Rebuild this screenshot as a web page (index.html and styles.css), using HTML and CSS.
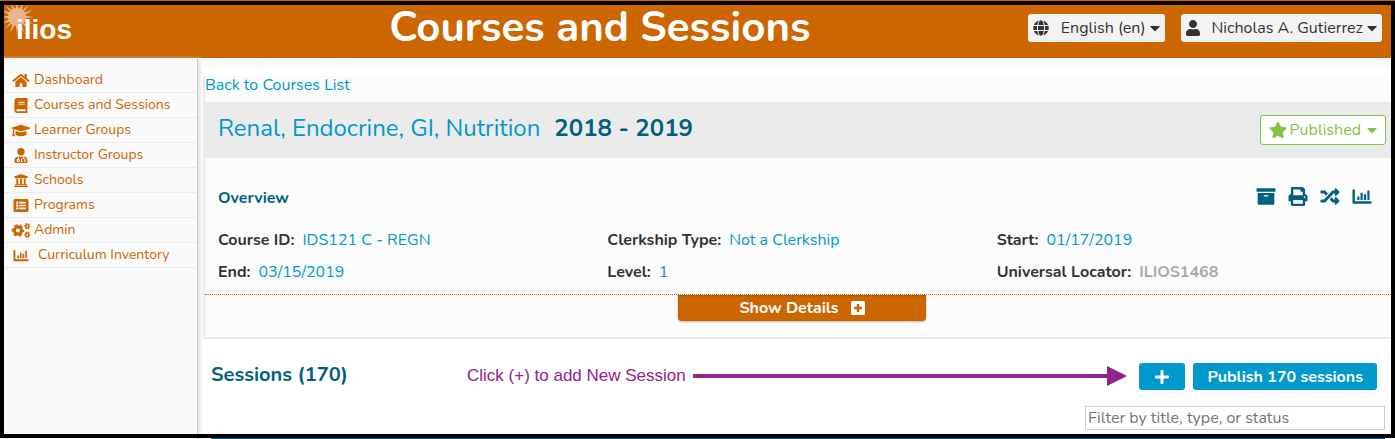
FILE: index.html
```html
<!DOCTYPE html>
<html lang="en">
<head>
<meta charset="utf-8">
<title>Ilios - Courses and Sessions</title>
<link rel="stylesheet" href="styles.css">
</head>
<body>
<svg class="sprite" aria-hidden="true">
  <symbol id="home" viewBox="0 0 576 512"><path d="M280.37 148.26L96 300.11V464a16 16 0 0 0 16 16l112.06-.29a16 16 0 0 0 15.92-16V368a16 16 0 0 1 16-16h64a16 16 0 0 1 16 16v95.64a16 16 0 0 0 16 16.05L464 480a16 16 0 0 0 16-16V300L295.67 148.26a12.19 12.19 0 0 0-15.3 0zM571.6 251.47L488 182.56V44.05a12 12 0 0 0-12-12h-56a12 12 0 0 0-12 12v72.61L318.47 43a48 48 0 0 0-61 0L4.34 251.47a12 12 0 0 0-1.6 16.9l25.5 31A12 12 0 0 0 45.15 301l235.22-193.74a12.19 12.19 0 0 1 15.3 0L530.9 301a12 12 0 0 0 16.9-1.6l25.5-31a12 12 0 0 0-1.7-16.93z"/></symbol>
  <symbol id="book" viewBox="0 0 448 512"><path d="M448 360V24c0-13.3-10.7-24-24-24H96C43 0 0 43 0 96v320c0 53 43 96 96 96h328c13.3 0 24-10.7 24-24v-16c0-7.5-3.5-14.3-8.9-18.7-4.2-15.4-4.2-59.3 0-74.7 5.4-4.3 8.9-11.1 8.9-18.6zM128 134c0-3.3 2.7-6 6-6h212c3.3 0 6 2.7 6 6v20c0 3.3-2.7 6-6 6H134c-3.3 0-6-2.7-6-6v-20zm0 64c0-3.3 2.7-6 6-6h212c3.3 0 6 2.7 6 6v20c0 3.3-2.7 6-6 6H134c-3.3 0-6-2.7-6-6v-20zm253.4 250H96c-17.7 0-32-14.3-32-32 0-17.6 14.4-32 32-32h285.4c-1.9 17.1-1.9 46.9 0 64z"/></symbol>
  <symbol id="cap" viewBox="0 0 640 512"><path d="M622.34 153.2L343.4 67.5c-15.2-4.67-31.6-4.67-46.79 0L17.66 153.2c-23.54 7.23-23.54 38.36 0 45.59l48.63 14.94c-10.67 13.19-17.23 29.28-17.88 46.9C38.78 266.15 32 276.11 32 288c0 10.78 5.68 19.85 13.86 25.65L20.33 428.53C18.11 438.52 25.71 448 35.94 448h56.11c10.24 0 17.84-9.48 15.62-19.47L82.14 313.65C90.32 307.85 96 298.78 96 288c0-11.57-6.47-21.25-15.66-26.87.76-15.02 8.44-28.3 20.69-36.72L296.6 284.5c9.06 2.78 26.44 6.25 46.79 0l278.95-85.7c23.55-7.24 23.55-38.36 0-45.6zM352.79 315.09c-28.53 8.76-52.84 3.92-65.59 0l-145.02-44.55L128 384c0 35.35 85.96 64 192 64s192-28.65 192-64l-14.18-113.47-145.03 44.56z"/></symbol>
  <symbol id="doctor" viewBox="0 0 448 512"><path d="M224 256c70.7 0 128-57.3 128-128S294.7 0 224 0 96 57.3 96 128s57.3 128 128 128zM104 424c0 13.3 10.7 24 24 24s24-10.7 24-24-10.7-24-24-24-24 10.7-24 24zm216-135.4v49c36.5 7.4 64 39.8 64 78.4v41.7c0 7.6-5.4 14.2-12.9 15.7l-32.2 6.4c-4.3.9-8.5-1.9-9.4-6.3l-3.1-15.7c-.9-4.3 1.9-8.6 6.3-9.4l19.3-3.9V416c0-62.8-96-65.1-96 1.9v26.7l19.3 3.9c4.3.9 7.1 5.1 6.3 9.4l-3.1 15.7c-.9 4.3-5.1 7.1-9.4 6.3l-31.2-4.2c-7.9-1.1-13.8-7.8-13.8-15.9V416c0-38.6 27.5-70.9 64-78.4v-45.2c-2.2.7-4.4 1.1-6.6 1.9-18 6.3-37.3 9.8-57.4 9.8s-39.4-3.5-57.4-9.8c-7.4-2.6-14.9-4.2-22.6-5.2v81.6c23.1 6.9 40 28.1 40 53.4 0 30.9-25.1 56-56 56s-56-25.1-56-56c0-25.3 16.9-46.5 40-53.4v-80.4C48.5 301 0 355.8 0 422.4v44.8C0 491.9 20.1 512 44.8 512h358.4c24.7 0 44.8-20.1 44.8-44.8v-44.8c0-72-56.8-130.3-128-133.8z"/></symbol>
  <symbol id="school" viewBox="0 0 512 512"><path d="M496 128v16a8 8 0 0 1-8 8h-24v12c0 6.627-5.373 12-12 12H60c-6.627 0-12-5.373-12-12v-12H24a8 8 0 0 1-8-8v-16a8 8 0 0 1 4.941-7.392l232-88a7.996 7.996 0 0 1 6.118 0l232 88A8 8 0 0 1 496 128zm-24 304H40c-13.255 0-24 10.745-24 24v16a8 8 0 0 0 8 8h464a8 8 0 0 0 8-8v-16c0-13.255-10.745-24-24-24zM96 192v192H60c-6.627 0-12 5.373-12 12v20h416v-20c0-6.627-5.373-12-12-12h-36V192h-64v192h-64V192h-64v192h-64V192H96z"/></symbol>
  <symbol id="list" viewBox="0 0 512 512"><path fill-rule="evenodd" d="M48 32h416a48 48 0 0 1 48 48v352a48 48 0 0 1-48 48H48a48 48 0 0 1-48-48V80a48 48 0 0 1 48-48zM128 120a40 40 0 1 0 0 80a40 40 0 1 0 0-80zM128 216a40 40 0 1 0 0 80a40 40 0 1 0 0-80zM128 312a40 40 0 1 0 0 80a40 40 0 1 0 0-80zM192 132h224v56H192zM192 228h224v56H192zM192 324h224v56H192z"/></symbol>
  <symbol id="cogs" viewBox="0 0 640 512"><g fill="none" stroke="currentColor"><circle cx="216" cy="256" r="122" stroke-width="100"/><circle cx="216" cy="256" r="184" stroke-width="60" stroke-dasharray="104 88.700" stroke-dashoffset="52"/><circle cx="536" cy="108" r="54" stroke-width="48"/><circle cx="536" cy="108" r="88" stroke-width="40" stroke-dasharray="50 42.150" stroke-dashoffset="25"/><circle cx="536" cy="404" r="54" stroke-width="48"/><circle cx="536" cy="404" r="88" stroke-width="40" stroke-dasharray="50 42.150" stroke-dashoffset="25"/></g></symbol>
  <symbol id="chart" viewBox="0 0 512 512"><path d="M0 76a12 12 0 0 1 12-12h40a12 12 0 0 1 12 12v308h436a12 12 0 0 1 12 12v40a12 12 0 0 1-12 12H24a24 24 0 0 1-24-24zM128 256h58v96h-58zM216 152h58v200h-58zM308 192h58v160h-58zM400 96h58v256h-58z"/></symbol>
  <symbol id="globe" viewBox="0 0 496 512"><path d="M336.500 160C322 70.700 287.800 8 248 8s-74 62.700-88.500 152h177zM152 256c0 22.200 1.200 43.500 3.300 64h185.300c2.100-20.500 3.300-41.800 3.300-64s-1.200-43.500-3.300-64H155.300c-2.100 20.500-3.300 41.800-3.300 64zm324.700-96c-28.600-67.900-86.500-120.400-158-141.600 24.400 33.800 41.200 84.700 50 141.600h108zM177.200 18.400C105.800 39.600 47.800 92.100 19.300 160h108c8.700-56.900 25.500-107.800 49.900-141.600zM487.400 192H372.700c2.100 21 3.300 42.500 3.300 64s-1.200 43-3.300 64h114.600c5.500-20.500 8.600-41.800 8.600-64s-3.100-43.500-8.500-64zM120 256c0-21.500 1.200-43 3.300-64H8.600C3.200 212.500 0 233.800 0 256s3.200 43.500 8.600 64h114.600c-2-21-3.200-42.500-3.200-64zm39.500 96c14.500 89.300 48.700 152 88.500 152s74-62.700 88.500-152h-177zm159.300 141.600c71.400-21.200 129.400-73.700 158-141.600h-108c-8.800 56.900-25.600 107.800-50 141.600zM19.300 352c28.600 67.900 86.500 120.400 158 141.600-24.400-33.800-41.200-84.700-50-141.600h-108z"/></symbol>
  <symbol id="user" viewBox="0 0 448 512"><path d="M224 256c70.700 0 128-57.300 128-128S294.700 0 224 0 96 57.300 96 128s57.300 128 128 128zm89.600 32h-16.700c-22.200 10.200-46.900 16-72.900 16s-50.600-5.800-72.900-16h-16.700C60.200 288 0 348.200 0 422.400V464c0 26.500 21.500 48 48 48h352c26.500 0 48-21.500 48-48v-41.600c0-74.200-60.200-134.400-134.400-134.400z"/></symbol>
  <symbol id="star" viewBox="0 0 576 512"><path d="M259.300 17.800L194 150.200 47.900 171.500c-26.200 3.800-36.700 36.100-17.700 54.600l105.700 103-25 145.500c-4.500 26.300 23.200 46 46.400 33.700L288 439.600l130.700 68.700c23.200 12.200 50.900-7.400 46.400-33.700l-25-145.500 105.700-103c19-18.500 8.500-50.800-17.700-54.600L382 150.200 316.700 17.800c-11.700-23.600-45.600-23.900-57.400 0z"/></symbol>
  <symbol id="caret" viewBox="0 0 320 512"><path d="M31.300 192h257.300c17.800 0 26.700 21.500 14.100 34.100L174.100 354.800c-7.800 7.800-20.500 7.800-28.300 0L17.200 226.100C4.600 213.500 13.500 192 31.300 192z"/></symbol>
  <symbol id="archive" viewBox="0 0 512 512"><path d="M32 448c0 17.700 14.300 32 32 32h384c17.700 0 32-14.300 32-32V160H32v288zm160-212c0-6.600 5.400-12 12-12h104c6.600 0 12 5.400 12 12v8c0 6.600-5.400 12-12 12H204c-6.600 0-12-5.400-12-12v-8zM480 32H32C14.300 32 0 46.300 0 64v48c0 8.800 7.200 16 16 16h480c8.800 0 16-7.200 16-16V64c0-17.700-14.300-32-32-32z"/></symbol>
  <symbol id="print" viewBox="0 0 512 512"><path d="M448 192V77.250c0-8.490-3.370-16.620-9.370-22.630L393.370 9.370c-6-6-14.140-9.370-22.630-9.370H96C78.330 0 64 14.330 64 32v160c-35.350 0-64 28.650-64 64v112c0 8.840 7.160 16 16 16h48v96c0 17.670 14.330 32 32 32h320c17.670 0 32-14.330 32-32v-96h48c8.840 0 16-7.160 16-16V256c0-35.350-28.650-64-64-64zm-64 256H128v-96h256v96zm0-224H128V64h192v48c0 8.840 7.160 16 16 16h48v96zm48 72c-13.250 0-24-10.750-24-24 0-13.260 10.750-24 24-24s24 10.740 24 24c0 13.250-10.750 24-24 24z"/></symbol>
  <symbol id="random" viewBox="0 0 512 512"><path d="M504.971 359.029c9.373 9.373 9.373 24.569 0 33.941l-80 79.984c-15.010 15.010-40.971 4.490-40.971-16.971V416h-58.785a12.004 12.004 0 0 1-8.773-3.812l-70.556-75.596 53.333-57.143L352 336h32v-39.981c0-21.438 25.943-31.998 40.971-16.971l80 79.981zM12 176h84l52.781 56.551 53.333-57.143-70.556-75.596A11.999 11.999 0 0 0 122.785 96H12c-6.627 0-12 5.373-12 12v56c0 6.627 5.373 12 12 12zm372 0v39.984c0 21.460 25.961 31.980 40.971 16.971l80-79.984c9.373-9.373 9.373-24.569 0-33.941l-80-79.981C409.943 24.021 384 34.582 384 56.019V96h-58.785a12.004 12.004 0 0 0-8.773 3.812L96 336H12c-6.627 0-12 5.373-12 12v56c0 6.627 5.373 12 12 12h110.785c3.326 0 6.503-1.381 8.773-3.812L352 176h32z"/></symbol>
  <symbol id="plus-square" viewBox="0 0 448 512"><path fill-rule="evenodd" d="M48 32h352a48 48 0 0 1 48 48v352a48 48 0 0 1-48 48H48a48 48 0 0 1-48-48V80a48 48 0 0 1 48-48zM184 128v88H96v80h88v88h80v-88h88v-80h-88v-88z"/></symbol>
  <symbol id="plus" viewBox="0 0 448 512"><path d="M416 208H272V64a32 32 0 0 0-32-32h-32a32 32 0 0 0-32 32v144H32a32 32 0 0 0-32 32v32a32 32 0 0 0 32 32h144v144a32 32 0 0 0 32 32h32a32 32 0 0 0 32-32V304h144a32 32 0 0 0 32-32v-32a32 32 0 0 0-32-32z"/></symbol>
</svg>

<div class="page">
  <header class="topbar">
    <a class="logo" href="#" aria-label="ilios home">
      <svg class="sun" viewBox="0 0 34 34" aria-hidden="true"><circle cx="17" cy="17" r="9"/><path d="M17 0l1.500 11h-3zM17 34l1.500-11h-3zM0 17l11 1.500v-3zM34 17l-11 1.500v-3zM5 5l9 7-2 2zM29 5l-9 7 2 2zM5 29l9-7-2-2zM29 29l-9-7 2-2zM10 1l6 10-3 1zM24 1l-6 10 3 1zM10 33l6-10-3-1zM24 33l-6-10 3-1zM1 10l10 6 1-3zM33 10l-10 6-1-3zM1 24l10-6 1 3zM33 24l-10-6-1 3z"/></svg>
      <span class="wordmark">ilios</span>
    </a>
    <h1 class="page-title">Courses and Sessions</h1>
    <div class="tools">
      <button class="menu-button" type="button"><svg class="icon"><use href="#globe"/></svg><span class="menu-label">English (en)</span><svg class="caret"><use href="#caret"/></svg></button>
      <button class="menu-button" type="button"><svg class="icon icon-user"><use href="#user"/></svg><span class="menu-label">Nicholas A. Gutierrez</span><svg class="caret"><use href="#caret"/></svg></button>
    </div>
  </header>

  <div class="body">
    <nav class="sidebar" aria-label="Main">
      <a class="nav-link" href="#"><svg class="nav-icon"><use href="#home"/></svg>Dashboard</a>
      <a class="nav-link" href="#"><svg class="nav-icon"><use href="#book"/></svg>Courses and Sessions</a>
      <a class="nav-link" href="#"><svg class="nav-icon"><use href="#cap"/></svg>Learner Groups</a>
      <a class="nav-link" href="#"><svg class="nav-icon"><use href="#doctor"/></svg>Instructor Groups</a>
      <a class="nav-link" href="#"><svg class="nav-icon"><use href="#school"/></svg>Schools</a>
      <a class="nav-link" href="#"><svg class="nav-icon"><use href="#list"/></svg>Programs</a>
      <a class="nav-link" href="#"><svg class="nav-icon"><use href="#cogs"/></svg>Admin</a>
      <a class="nav-link nav-link-wide" href="#"><svg class="nav-icon"><use href="#chart"/></svg>Curriculum Inventory</a>
    </nav>

    <main class="main">
      <div class="strip"></div>
      <section class="course">
        <div class="back"><a href="#">Back to Courses List</a></div>
        <div class="course-head">
          <h2 class="course-title"><a href="#">Renal, Endocrine, GI, Nutrition</a><span class="year">2018 - 2019</span></h2>
          <button class="published" type="button"><svg class="star"><use href="#star"/></svg>Published<svg class="caret"><use href="#caret"/></svg></button>
        </div>
        <div class="overview">
          <div class="overview-head">
            <h3 class="overview-title">Overview</h3>
            <div class="actions">
              <button type="button" aria-label="Materials"><svg><use href="#archive"/></svg></button>
              <button type="button" aria-label="Print"><svg><use href="#print"/></svg></button>
              <button type="button" aria-label="Rollover"><svg><use href="#random"/></svg></button>
              <button type="button" aria-label="Visualizations"><svg><use href="#chart"/></svg></button>
            </div>
          </div>
          <dl class="facts">
            <div class="fact"><dt>Course ID:</dt><dd><a href="#">IDS121 C - REGN</a></dd></div>
            <div class="fact"><dt>Clerkship Type:</dt><dd><a href="#">Not a Clerkship</a></dd></div>
            <div class="fact"><dt>Start:</dt><dd><a href="#">01/17/2019</a></dd></div>
            <div class="fact"><dt>End:</dt><dd><a href="#">03/15/2019</a></dd></div>
            <div class="fact"><dt>Level:</dt><dd><a href="#">1</a></dd></div>
            <div class="fact"><dt>Universal Locator:</dt><dd class="locator">ILIOS1468</dd></div>
          </dl>
        </div>
        <div class="details">
          <button class="details-button" type="button">Show Details<svg><use href="#plus-square"/></svg></button>
        </div>
      </section>

      <section class="sessions">
        <div class="sessions-head">
          <h2 class="sessions-title">Sessions (170)</h2>
          <div class="callout">
            <span>Click (+) to add New Session</span>
            <span class="arrow"></span>
          </div>
          <div class="session-actions">
            <button class="primary add" type="button" aria-label="Add session"><svg><use href="#plus"/></svg></button>
            <button class="primary" type="button">Publish 170 sessions</button>
          </div>
        </div>
        <div class="filter-row"><input class="filter" type="text" placeholder="Filter by title, type, or status" aria-label="Filter by title, type, or status"></div>
        <div class="table-top"></div>
      </section>
    </main>
  </div>
  <div class="frame"></div>
</div>
</body>
</html>
```
FILE: styles.css
```css
* { box-sizing: border-box; }

body {
  margin: 0;
  background: #fff;
  color: #333;
  font-family: Nunito, Lato, "Open Sans", sans-serif;
  font-size: 16px;
  line-height: 20px;
}

h1, h2, h3, dl, dd { margin: 0; }
a { color: #09c; text-decoration: none; }
button { font: inherit; cursor: pointer; }
svg { fill: currentColor; flex: none; }
.sprite { position: absolute; width: 0; height: 0; }

.page {
  position: relative;
  display: flex;
  flex-direction: column;
  min-height: 100vh;
}

.frame {
  position: absolute;
  inset: 1px 0;
  border: 4px solid #000;
  pointer-events: none;
}

/* Top bar */
.topbar {
  display: grid;
  grid-template-columns: 172px 1fr auto;
  height: 58px;
  padding-right: 13px;
  background: #c60;
}
.logo {
  position: relative;
  padding: 16px 0 0 16px;
  color: #fff;
}
.sun {
  position: absolute;
  left: 0;
  top: 0;
  width: 34px;
  height: 34px;
  color: #e8b48c;
}
.wordmark {
  position: relative;
  font: bold 28px/28px "Liberation Sans", Arial, sans-serif;
}
.page-title {
  padding-top: 4px;
  color: #fff;
  font-size: 42px;
  line-height: 48px;
  font-weight: 700;
  text-align: center;
}
.tools {
  display: flex;
  justify-content: flex-end;
  align-items: flex-start;
  gap: 16px;
  padding-top: 14px;
}
.menu-button {
  display: flex;
  align-items: center;
  height: 28px;
  padding: 0 5px;
  border: 0;
  border-radius: 3px;
  background: #f3f3f3;
  color: #333;
  white-space: nowrap;
}
.icon { width: 16px; height: 16px; }
.icon-user { width: 14px; }
.menu-label { margin: 0 4px 0 12px; }
.caret { width: 10px; height: 16px; }

/* Sidebar */
.body { display: flex; flex: 1; }
.sidebar {
  width: 198px;
  flex: none;
  padding: 10px 0 0 4px;
  background: #fafafa;
  border-right: 1px solid #ccc;
  box-shadow: 2px 1px 4px #ddd;
}
.nav-link {
  display: flex;
  align-items: center;
  gap: 3px;
  height: 25px;
  padding-left: 7px;
  border-bottom: 1px solid #ebebeb;
  color: #c60;
  font-size: 14px;
}
.nav-link-wide { gap: 7px; }
.nav-icon { width: 20px; height: 15px; }

/* Course panel */
.main { flex: 1; min-width: 0; padding: 0 4px 0 5px; }
.strip { height: 10px; margin-bottom: 8px; background: #fafafa; }
.course {
  border: 2px solid #ebebeb;
  border-width: 0 0 2px 2px;
  background: #fbfbfb;
}
.back { height: 26px; line-height: 18px; }
.course-head {
  display: flex;
  justify-content: space-between;
  align-items: center;
  height: 56px;
  padding: 0 5px 0 13px;
  background: #ebebeb;
}
.course-title {
  display: flex;
  gap: 14px;
  padding-bottom: 4px;
  font-size: 24px;
  line-height: 32px;
  font-weight: 400;
}
.year { color: #006080; font-weight: 700; }
.published {
  display: flex;
  align-items: center;
  height: 30px;
  padding: 0 8px;
  border: 1px solid #84c444;
  border-radius: 3px;
  background: #fff;
  color: #84c444;
}
.published .caret { margin-left: 6px; }
.star { width: 18px; height: 16px; margin-right: 3px; }
.overview { padding: 24px 5px 12px 13px; }
.overview-head {
  display: flex;
  justify-content: space-between;
  align-items: center;
  height: 32px;
  padding-right: 14px;
}
.overview-title { color: #006080; font-size: 16px; font-weight: 700; }
.actions { display: flex; gap: 12px; padding-bottom: 3px; }
.actions button {
  display: flex;
  padding: 0;
  border: 0;
  background: none;
  color: #006080;
}
.actions svg { width: 20px; height: 19px; }
.facts {
  display: grid;
  grid-template-columns: repeat(3, 1fr);
  row-gap: 12px;
  padding-top: 16px;
}
.fact { display: flex; gap: 8px; }
dt { font-weight: 700; }
.locator { color: #aaa; font-weight: 700; }
.details {
  display: flex;
  justify-content: center;
  height: 43px;
  padding-left: 8px;
  border-top: 1px dotted #c60;
}
.details-button {
  display: flex;
  align-items: center;
  justify-content: center;
  gap: 12px;
  width: 248px;
  height: 26px;
  border: 0;
  border-radius: 0 0 4px 4px;
  background: #c60;
  box-shadow: 0 1px 2px #bbb, inset 0 1px 2px #a35200;
  color: #fff;
  font-weight: 700;
}
.details-button svg { width: 14px; height: 16px; }

/* Sessions */
.sessions { padding: 24px 6px 0 8px; }
.sessions-head { display: flex; align-items: center; height: 27px; }
.sessions-title {
  width: 256px;
  padding-bottom: 4px;
  color: #006080;
  font-size: 20px;
  line-height: 24px;
  font-weight: 700;
}
.callout {
  display: flex;
  flex: 1;
  align-items: center;
  gap: 7px;
  padding-bottom: 2px;
  color: #93218f;
  font: 17px/20px "Liberation Sans", Arial, sans-serif;
  white-space: nowrap;
}
.arrow { display: flex; flex: 1; align-items: center; }
.arrow::before { content: ""; flex: 1; height: 4px; background: currentColor; }
.arrow::after {
  content: "";
  border: 10px solid transparent;
  border-left: 20px solid currentColor;
  border-right: 0;
}
.session-actions { display: flex; gap: 8px; padding: 0 8px 0 12px; }
.primary {
  display: flex;
  align-items: center;
  justify-content: center;
  height: 27px;
  padding: 0 14px;
  border: 0;
  border-radius: 3px;
  background: #09c;
  color: #fff;
  font-weight: 700;
}
.add { padding: 0 16px; }
.primary svg { width: 14px; height: 16px; }
.filter-row { display: flex; justify-content: flex-end; padding: 16px 0 8px; }
.filter {
  width: 300px;
  height: 24px;
  padding: 0 2px;
  border: 1px solid #ccc;
  background: #fff;
  font: inherit;
}
.filter::placeholder { color: #757575; opacity: 1; }
.table-top { height: 1px; background: #006080; }
```
